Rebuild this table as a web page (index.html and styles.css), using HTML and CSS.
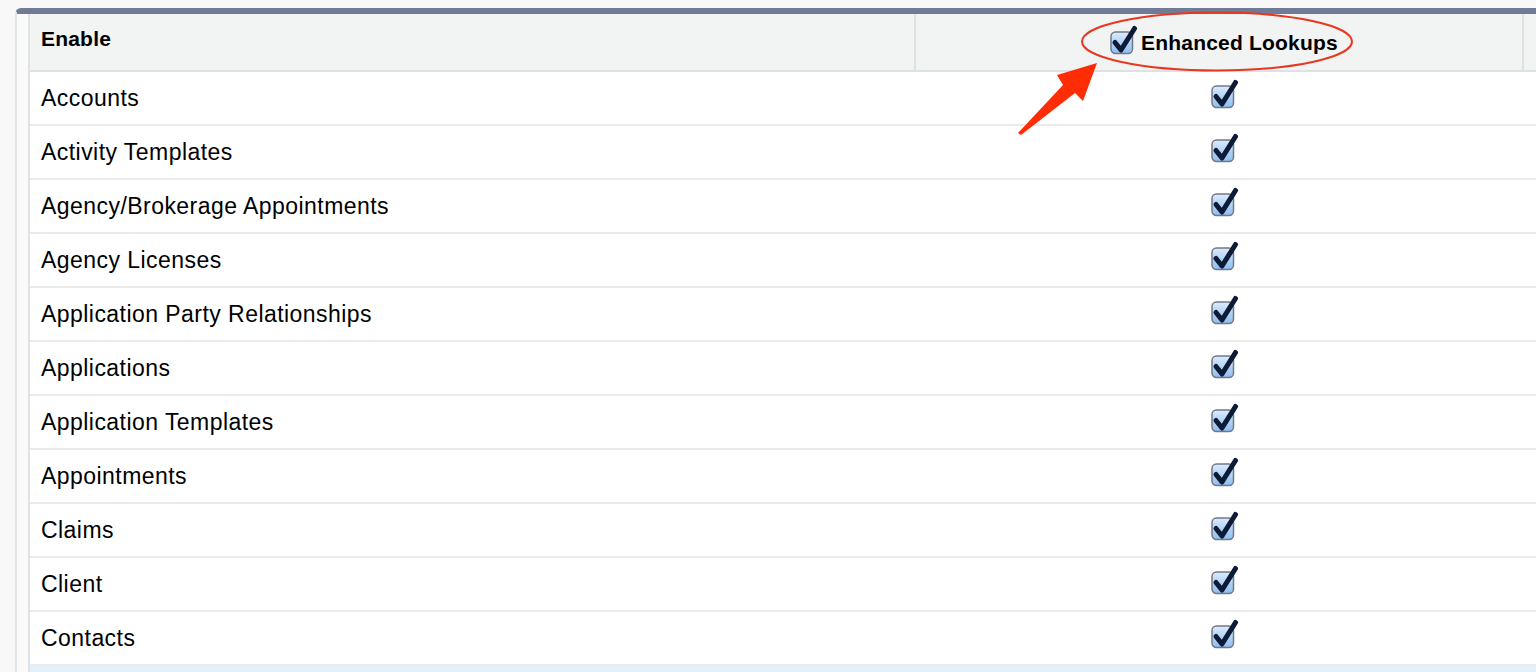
FILE: index.html
```html
<!DOCTYPE html>
<html>
<head>
<meta charset="utf-8">
<link rel="stylesheet" href="styles.css">
</head>
<body>
<svg width="0" height="0" class="defs">
  <defs>
    <linearGradient id="cbfill" x1="0" y1="0" x2="0" y2="1">
      <stop offset="0" stop-color="#dcebfc"/>
      <stop offset="0.5" stop-color="#b2d4f7"/>
      <stop offset="1" stop-color="#8fbff0"/>
    </linearGradient>
    <symbol id="cb" viewBox="0 0 28 30">
      <rect x="1" y="7" width="21.5" height="21.5" rx="4.5" fill="url(#cbfill)" stroke="#737887" stroke-width="1.5"/>
      <path d="M5 17.5 L11 25 L24.5 3.5" fill="none" stroke="#0e1b36" stroke-width="5" stroke-linecap="round" stroke-linejoin="round"/>
    </symbol>
  </defs>
</svg>
<div class="panel">
  <div class="grid">
    <div class="hcell hfirst">Enable</div>
    <div class="hcell hcheck"><svg class="cb cb-head"><use href="#cb"/></svg><span>Enhanced Lookups</span></div>
    <div class="hcell hlast"></div>

    <div class="row"><div class="name">Accounts</div><div class="check"><svg class="cb"><use href="#cb"/></svg></div><div></div></div>
    <div class="row"><div class="name">Activity Templates</div><div class="check"><svg class="cb"><use href="#cb"/></svg></div><div></div></div>
    <div class="row"><div class="name">Agency/Brokerage Appointments</div><div class="check"><svg class="cb"><use href="#cb"/></svg></div><div></div></div>
    <div class="row"><div class="name">Agency Licenses</div><div class="check"><svg class="cb"><use href="#cb"/></svg></div><div></div></div>
    <div class="row"><div class="name">Application Party Relationships</div><div class="check"><svg class="cb"><use href="#cb"/></svg></div><div></div></div>
    <div class="row"><div class="name">Applications</div><div class="check"><svg class="cb"><use href="#cb"/></svg></div><div></div></div>
    <div class="row"><div class="name">Application Templates</div><div class="check"><svg class="cb"><use href="#cb"/></svg></div><div></div></div>
    <div class="row"><div class="name">Appointments</div><div class="check"><svg class="cb"><use href="#cb"/></svg></div><div></div></div>
    <div class="row"><div class="name">Claims</div><div class="check"><svg class="cb"><use href="#cb"/></svg></div><div></div></div>
    <div class="row"><div class="name">Client</div><div class="check"><svg class="cb"><use href="#cb"/></svg></div><div></div></div>
    <div class="row"><div class="name">Contacts</div><div class="check"><svg class="cb"><use href="#cb"/></svg></div><div></div></div>
    <div class="row blue"><div></div><div></div><div></div></div>
  </div>
</div>
<svg class="annot" width="1536" height="672" viewBox="0 0 1536 672">
  <ellipse cx="1217" cy="41.5" rx="135" ry="29" fill="none" stroke="#e8371f" stroke-width="2"/>
  <polygon points="1018,133 1063,85 1057,75 1097,63 1083,101 1075,93 1021,135" fill="#ff2d05"/>
</svg>
</body>
</html>
```
FILE: styles.css
```css
html, body {
  margin: 0;
  padding: 0;
}
body {
  background: #f8f8f8;
  width: 1536px;
  height: 672px;
  overflow: hidden;
  position: relative;
  font-family: "Liberation Sans", Arial, sans-serif;
  color: #000;
}
.defs {
  position: absolute;
  width: 0;
  height: 0;
}
.panel {
  margin: 8px 0 0 15px;
  width: 1521px;
  height: 664px;
  overflow: hidden;
  border-top: 6px solid #717b96;
  border-left: 2px solid #e3e4e6;
  border-top-left-radius: 6px;
  background: #fafafa;
  padding-left: 11px;
  box-sizing: border-box;
}
.grid {
  display: grid;
  grid-template-columns: 886px 608px 200px;
  border-left: 2px solid #e0e3e5;
  background: #fff;
}
.hcell {
  background: #f2f3f3;
  height: 58px;
  box-sizing: border-box;
  border-bottom: 2px solid #dfe2e5;
  border-right: 2px solid #dde0e4;
  font-weight: bold;
  font-size: 21px;
  letter-spacing: 0.2px;
}
.hfirst {
  padding: 13px 0 0 11px;
}
.hcheck {
  display: flex;
  align-items: center;
  justify-content: center;
  padding-left: 10px;
  padding-top: 1px;
}
.hcheck span {
  margin-left: 3px;
}
.hlast {
  border-right: none;
}
.row {
  display: contents;
}
.row > div {
  height: 54px;
  box-sizing: border-box;
  border-bottom: 2px solid #ebebeb;
  display: flex;
  align-items: center;
}
.name {
  padding-left: 11px;
  font-size: 23px;
  letter-spacing: 0.45px;
}
.check {
  justify-content: center;
  padding-left: 10px;
}
.cb {
  width: 28px;
  height: 30px;
  flex: none;
  margin-top: -8px;
}
.cb-head {
  margin-top: -6px;
}
.row.blue > div {
  background: #e3f1fc;
  border-bottom: none;
}
.annot {
  position: absolute;
  left: 0;
  top: 0;
  pointer-events: none;
}
```
